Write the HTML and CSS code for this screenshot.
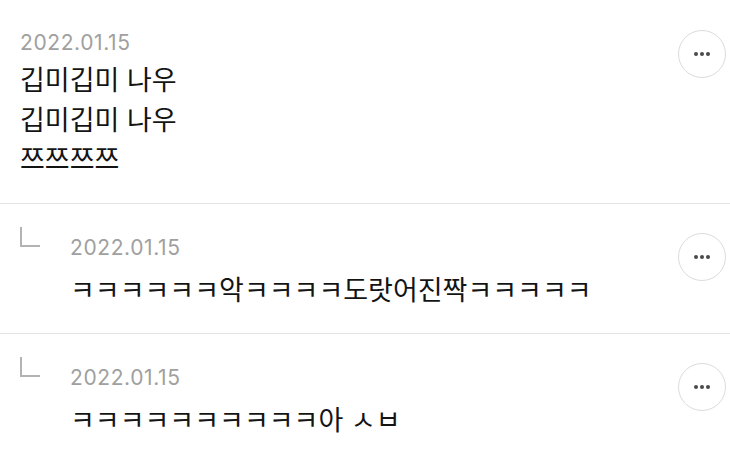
FILE: index.html
```html
<!DOCTYPE html>
<html lang="ko">
<head>
<meta charset="utf-8">
<link rel="stylesheet" href="styles.css">
</head>
<body>
<div class="list">
  <div class="item first">
    <div class="body">
      <div class="date">2022.01.15</div>
      <div class="text">깁미깁미 나우<br>깁미깁미 나우<br>쯔쯔쯔쯔</div>
    </div>
    <button class="more" aria-label="more"><span></span><span></span><span></span></button>
  </div>
  <div class="item reply">
    <div class="corner"></div>
    <div class="body">
      <div class="date">2022.01.15</div>
      <div class="text">ㅋㅋㅋㅋㅋㅋ악ㅋㅋㅋㅋ도랏어진짝ㅋㅋㅋㅋㅋ</div>
    </div>
    <button class="more" aria-label="more"><span></span><span></span><span></span></button>
  </div>
  <div class="item reply">
    <div class="corner"></div>
    <div class="body">
      <div class="date">2022.01.15</div>
      <div class="text">ㅋㅋㅋㅋㅋㅋㅋㅋㅋㅋ아 ㅅㅂ</div>
    </div>
    <button class="more" aria-label="more"><span></span><span></span><span></span></button>
  </div>
</div>
</body>
</html>
```
FILE: styles.css
```css
html, body {
  margin: 0;
  padding: 0;
  background: #ffffff;
}
body {
  font-family: "Noto Sans CJK KR", "Noto Sans", sans-serif;
  color: #111111;
  width: 730px;
  height: 456px;
  overflow: hidden;
}
.list {
  display: flex;
  flex-direction: column;
}
.item {
  display: flex;
  align-items: flex-start;
  padding: 28px 4px 25px 20px;
  border-bottom: 1px solid #e4e4e4;
}
.item.first .body {
  padding-top: 2px;
}
.item.first .text {
  line-height: 39.5px;
  margin-top: 3px;
}
.item.reply {
  padding: 23px 4px 25px 20px;
}
.item.reply .body {
  padding-top: 8px;
}
.body {
  flex: 1;
  min-width: 0;
}
.date {
  font-family: Inter, "Noto Sans", sans-serif;
  font-size: 21px;
  line-height: 26px;
  color: #a0a0a0;
  letter-spacing: 0.6px;
}
.text {
  font-size: 27px;
  line-height: 38px;
  color: #141414;
}
.reply .text {
  margin-top: 9px;
}
.corner {
  width: 18px;
  height: 18px;
  border-left: 2px solid #b3b3b3;
  border-bottom: 2px solid #b3b3b3;
  margin-right: 30px;
  flex: none;
}
.more {
  flex: none;
  width: 48px;
  height: 48px;
  border-radius: 50%;
  border: 1px solid #dcdcdc;
  background: #fff;
  padding: 0;
  margin-top: 2px;
  display: flex;
  align-items: center;
  justify-content: center;
  gap: 2px;
}
.reply .more {
  margin-top: 6px;
}
.more span {
  width: 4px;
  height: 4px;
  border-radius: 50%;
  background: #4a4a4a;
}
```
